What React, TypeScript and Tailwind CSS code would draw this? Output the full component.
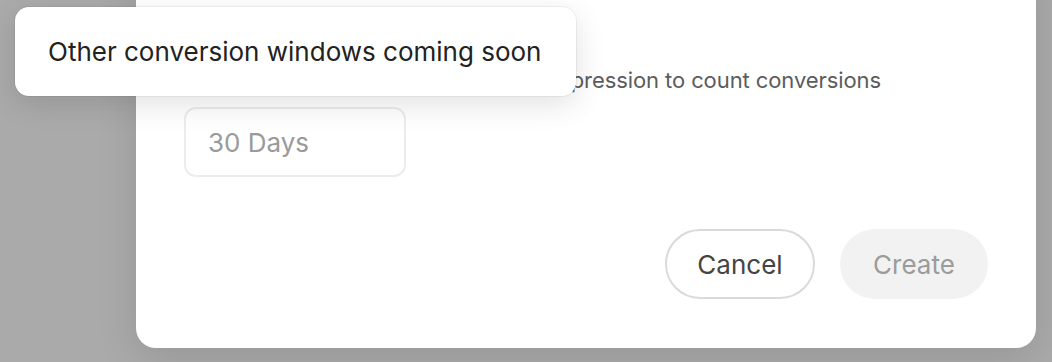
export default function App() {
  return (
    <div
      className="relative h-screen w-full overflow-hidden bg-[#aaaaaa]"
      style={{ fontFamily: 'Inter, "Liberation Sans", sans-serif' }}
    >
      {/* Modal */}
      <div className="ml-[136px] -mt-[40px] w-[900px] rounded-[20px] bg-white px-12 pb-[49px] pt-[106px] shadow-[0_10px_40px_rgba(0,0,0,0.12)]">
        <p className="text-[22px] leading-7 tracking-[-0.09px] text-[#5c5c5c]">
          Select the time window after an ad impression to count conversions
        </p>
        <div className="mt-[13px] flex h-[70px] w-[222px] items-center rounded-xl border-2 border-[#ececec] px-[22px] text-[26px] text-[#9a9a9a]">
          30 Days
        </div>
        <div className="mt-[52px] flex justify-end gap-[25px]">
          <button className="h-[70px] w-[150px] rounded-full border-2 border-[#dadada] text-[26px] text-[#444]">
            Cancel
          </button>
          <button className="h-[70px] w-[148px] rounded-full bg-[#f2f2f2] text-[26px] text-[#9b9b9b]">
            Create
          </button>
        </div>
      </div>

      {/* Tooltip */}
      <div className="absolute left-[15px] top-[7px] flex h-[89px] w-[561px] items-center rounded-[14px] bg-white pl-[33px] text-[26px] text-[#222] shadow-[0_8px_30px_rgba(0,0,0,0.12)] ring-1 ring-black/5">
        Other conversion windows coming soon
      </div>
    </div>
  )
}
